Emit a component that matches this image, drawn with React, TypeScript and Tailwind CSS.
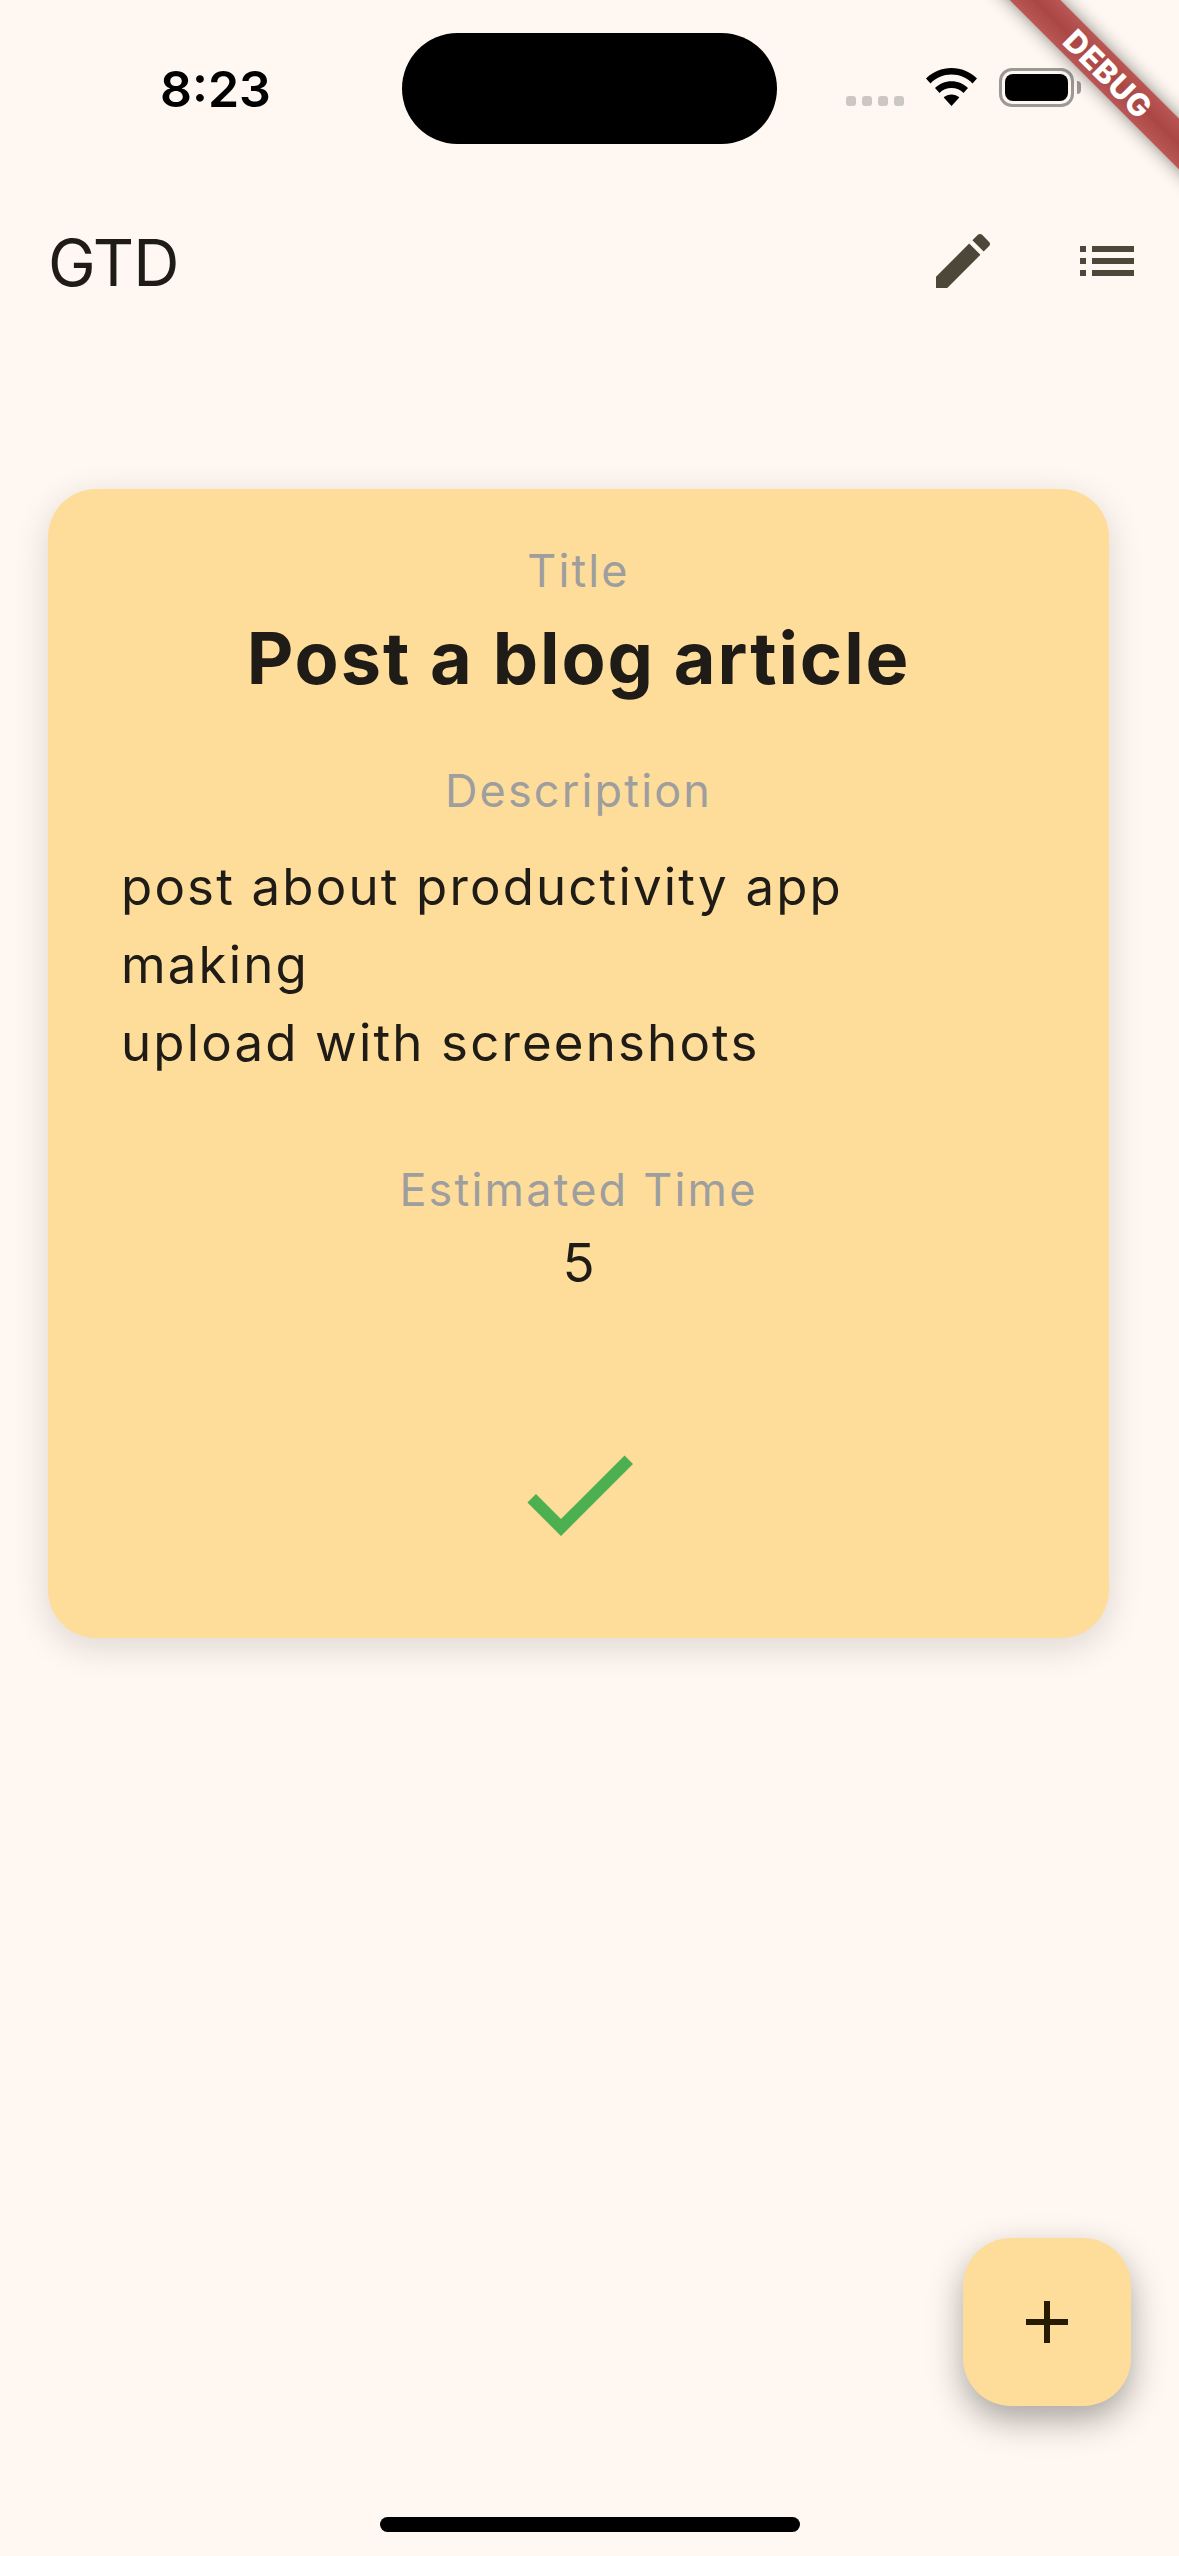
export default function App() {
  return (
    <div className="relative flex h-[2556px] w-[1179px] flex-col overflow-hidden bg-[#fff8f2] font-['Inter',sans-serif] text-[#1f1b16]">
      {/* Status bar */}
      <div className="flex h-[177px] shrink-0 items-start pt-[33px]">
        <div className="flex h-[111px] w-[402px] items-center pl-[160px] text-[50px] font-semibold leading-none text-black">8:23</div>
        <div className="h-[111px] w-[375px] rounded-full bg-black" />
        <div className="flex h-[111px] items-start pl-[69px] pt-[35px]">
          <div className="mt-[28px] flex gap-[6px]">
            <div className="h-[10px] w-[10px] rounded-[3px] bg-[#cbc8c4]" />
            <div className="h-[10px] w-[10px] rounded-[3px] bg-[#cbc8c4]" />
            <div className="h-[10px] w-[10px] rounded-[3px] bg-[#cbc8c4]" />
            <div className="h-[10px] w-[10px] rounded-[3px] bg-[#cbc8c4]" />
          </div>
          <svg className="ml-[22px]" width="51" height="38" viewBox="0 0 51 38" fill="#000">
            <path d="M25.5 0C15.6 0 7 3.8 0 10.4l4.5 5C10.3 9.8 17.5 6.6 25.5 6.6s15.2 3.2 21 8.8l4.5-5C44 3.8 35.4 0 25.5 0z" />
            <path d="M25.5 13.2c-6.4 0-12.1 2.5-16.5 6.7l4.5 5c3.1-3 7.3-4.8 12-4.8s8.900 1.800 12 4.800l4.500-5c-4.400-4.200-10.100-6.700-16.500-6.700z" />
            <path d="M25.5 26.500c-3 0-5.700 1.200-7.800 3.100L25.500 38l7.800-8.400c-2.100-1.900-4.800-3.100-7.800-3.100z" />
          </svg>
          <div className="ml-[22px] h-[39px] w-[75px] rounded-[13px] border-[3px] border-[#9c9995] p-[3px]">
            <div className="h-full w-full rounded-[8px] bg-black" />
          </div>
          <div className="ml-[3px] mt-[13px] h-[13px] w-[4px] rounded-r-full bg-[#9c9995]" />
        </div>
      </div>

      {/* App bar */}
      <div className="flex h-[168px] shrink-0 items-center pl-[48px] pr-[12px]">
        <div className="flex-1 pt-[3px] text-[64px] font-normal leading-none tracking-[-1px]">GTD</div>
        <div className="flex items-center gap-[24px]">
          <div className="p-[24px]">
            <svg width="72" height="72" viewBox="0 0 24 24" fill="#4e4639" className="block">
              <path d="M3 17.25V21h3.75L17.81 9.94l-3.75-3.75L3 17.25zM20.71 7.04c.39-.39.39-1.02 0-1.41l-2.34-2.34c-.39-.39-1.02-.39-1.41 0l-1.83 1.83 3.75 3.75 1.83-1.83z" />
            </svg>
          </div>
          <div className="p-[24px]">
            <svg width="72" height="72" viewBox="0 0 24 24" fill="#4e4639" className="block">
              <path d="M3 13h2v-2H3v2zm0 4h2v-2H3v2zm0-8h2V7H3v2zm4 4h14v-2H7v2zm0 4h14v-2H7v2zM7 7v2h14V7H7z" />
            </svg>
          </div>
        </div>
      </div>

      {/* Card */}
      <div className="mx-[48px] mt-[144px] flex h-[1149px] w-[1061px] shrink-0 flex-col items-center rounded-[48px] bg-[#fedd9b] pt-[55px] shadow-[0_9px_36px_rgba(0,0,0,0.14)]">
        <div className="text-[45px] leading-[54px] tracking-[2.1px] text-[#9e9e9e]">Title</div>
        <div className="mt-[18px] text-[72px] font-bold leading-[84px] tracking-[1.9px]">Post a blog article</div>
        <div className="mt-[64px] text-[45px] leading-[54px] tracking-[2.15px] text-[#9e9e9e]">Description</div>
        <div className="mt-[30px] w-full px-[73px] text-[51px] leading-[78px] tracking-[2.15px]">
          post about productivity app
          <br />
          making
          <br />
          upload with screenshots
        </div>
        <div className="mt-[81px] text-[45px] leading-[54px] tracking-[2.2px] text-[#9e9e9e]">Estimated Time</div>
        <div className="mt-[16px] text-[53px] leading-[60px]">5</div>
        <svg width="144" height="144" viewBox="0 0 24 24" fill="#4caf50" className="mt-[129px] block">
          <path d="M9 16.17L4.83 12l-1.42 1.41L9 19 21 7l-1.41-1.41z" />
        </svg>
      </div>

      {/* Home indicator */}
      <div className="mb-[24px] mt-auto h-[15px] w-[420px] self-center rounded-full bg-black" />

      {/* FAB */}
      <div className="absolute bottom-[150px] right-[48px] flex h-[168px] w-[168px] items-center justify-center rounded-[48px] bg-[#fedd9b] shadow-[0_14px_34px_rgba(0,0,0,0.34)]">
        <svg width="72" height="72" viewBox="0 0 24 24" fill="#261a00" className="block">
          <path d="M19 13h-6v6h-2v-6H5v-2h6V5h2v6h6v2z" />
        </svg>
      </div>

      {/* Debug banner */}
      <div className="absolute left-[907px] top-[54px] flex h-[36px] w-[400px] rotate-45 items-center justify-center bg-[linear-gradient(180deg,#b95755,#aa4745_50%,#b95755)] pl-[4px] text-[31px] font-extrabold leading-none tracking-[0.5px] text-white shadow-[0_0_18px_rgba(0,0,0,0.45)]">
        DEBUG
      </div>
    </div>
  );
}
